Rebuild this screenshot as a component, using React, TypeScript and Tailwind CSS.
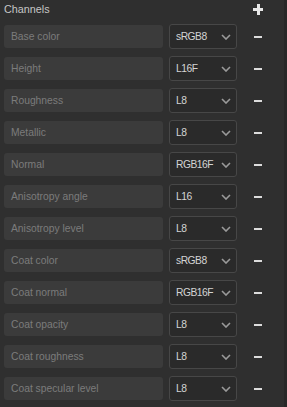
import React from "react";

const rows: [string, string][] = [
  ["Base color", "sRGB8"],
  ["Height", "L16F"],
  ["Roughness", "L8"],
  ["Metallic", "L8"],
  ["Normal", "RGB16F"],
  ["Anisotropy angle", "L16"],
  ["Anisotropy level", "L8"],
  ["Coat color", "sRGB8"],
  ["Coat normal", "RGB16F"],
  ["Coat opacity", "L8"],
  ["Coat roughness", "L8"],
  ["Coat specular level", "L8"],
];

function Chevron() {
  return (
    <svg width="10" height="6" viewBox="0 0 10 6" className="shrink-0">
      <path d="M1 1 L5 5 L9 1" fill="none" stroke="#9a9a9a" strokeWidth="1.6" />
    </svg>
  );
}

export default function App() {
  return (
    <div
      className="w-[287px] h-[407px] bg-[#2f2f2f] flex overflow-hidden"
      style={{ fontFamily: '"Liberation Sans", Arial, sans-serif' }}
    >
      <div className="flex-1 flex flex-col pl-[4px]">
        <div className="h-[18px] flex items-center">
          <span className="text-[10.8px] text-[#c6c6c6] leading-none pt-[1px]">Channels</span>
          <div className="flex-1" />
          <div className="w-[10px] h-[11px] relative mr-[21px]">
            <div className="absolute left-0 right-0 top-[4px] h-[3px] bg-[#e8e8e8]" />
            <div className="absolute top-0 bottom-0 left-[4px] w-[3px] bg-[#e8e8e8]" />
          </div>
        </div>
        <div className="flex flex-col gap-[7px] mt-[6px]">
          {rows.map(([name, fmt]) => (
            <div key={name} className="flex items-center h-[25px]">
              <div className="w-[159px] h-[23px] bg-[#3b3b3b] rounded-[3px] flex items-center pl-[7px] text-[10.3px] text-[#7c7c7c]">
                {name}
              </div>
              <div className="ml-[6px] w-[68px] h-[25px] bg-[#2a2a2a] border border-[#474747] rounded-[3px] flex items-center pl-[6px] pr-[5px] text-[10.3px] text-[#d4d4d4]">
                <span className="flex-1 tracking-[-0.5px]">{fmt}</span>
                <Chevron />
              </div>
              <div className="ml-[17px] w-[8px] h-[2px] bg-[#dcdcdc]" />
            </div>
          ))}
        </div>
      </div>
      <div className="w-[3px] bg-[#282828]" />
    </div>
  );
}
